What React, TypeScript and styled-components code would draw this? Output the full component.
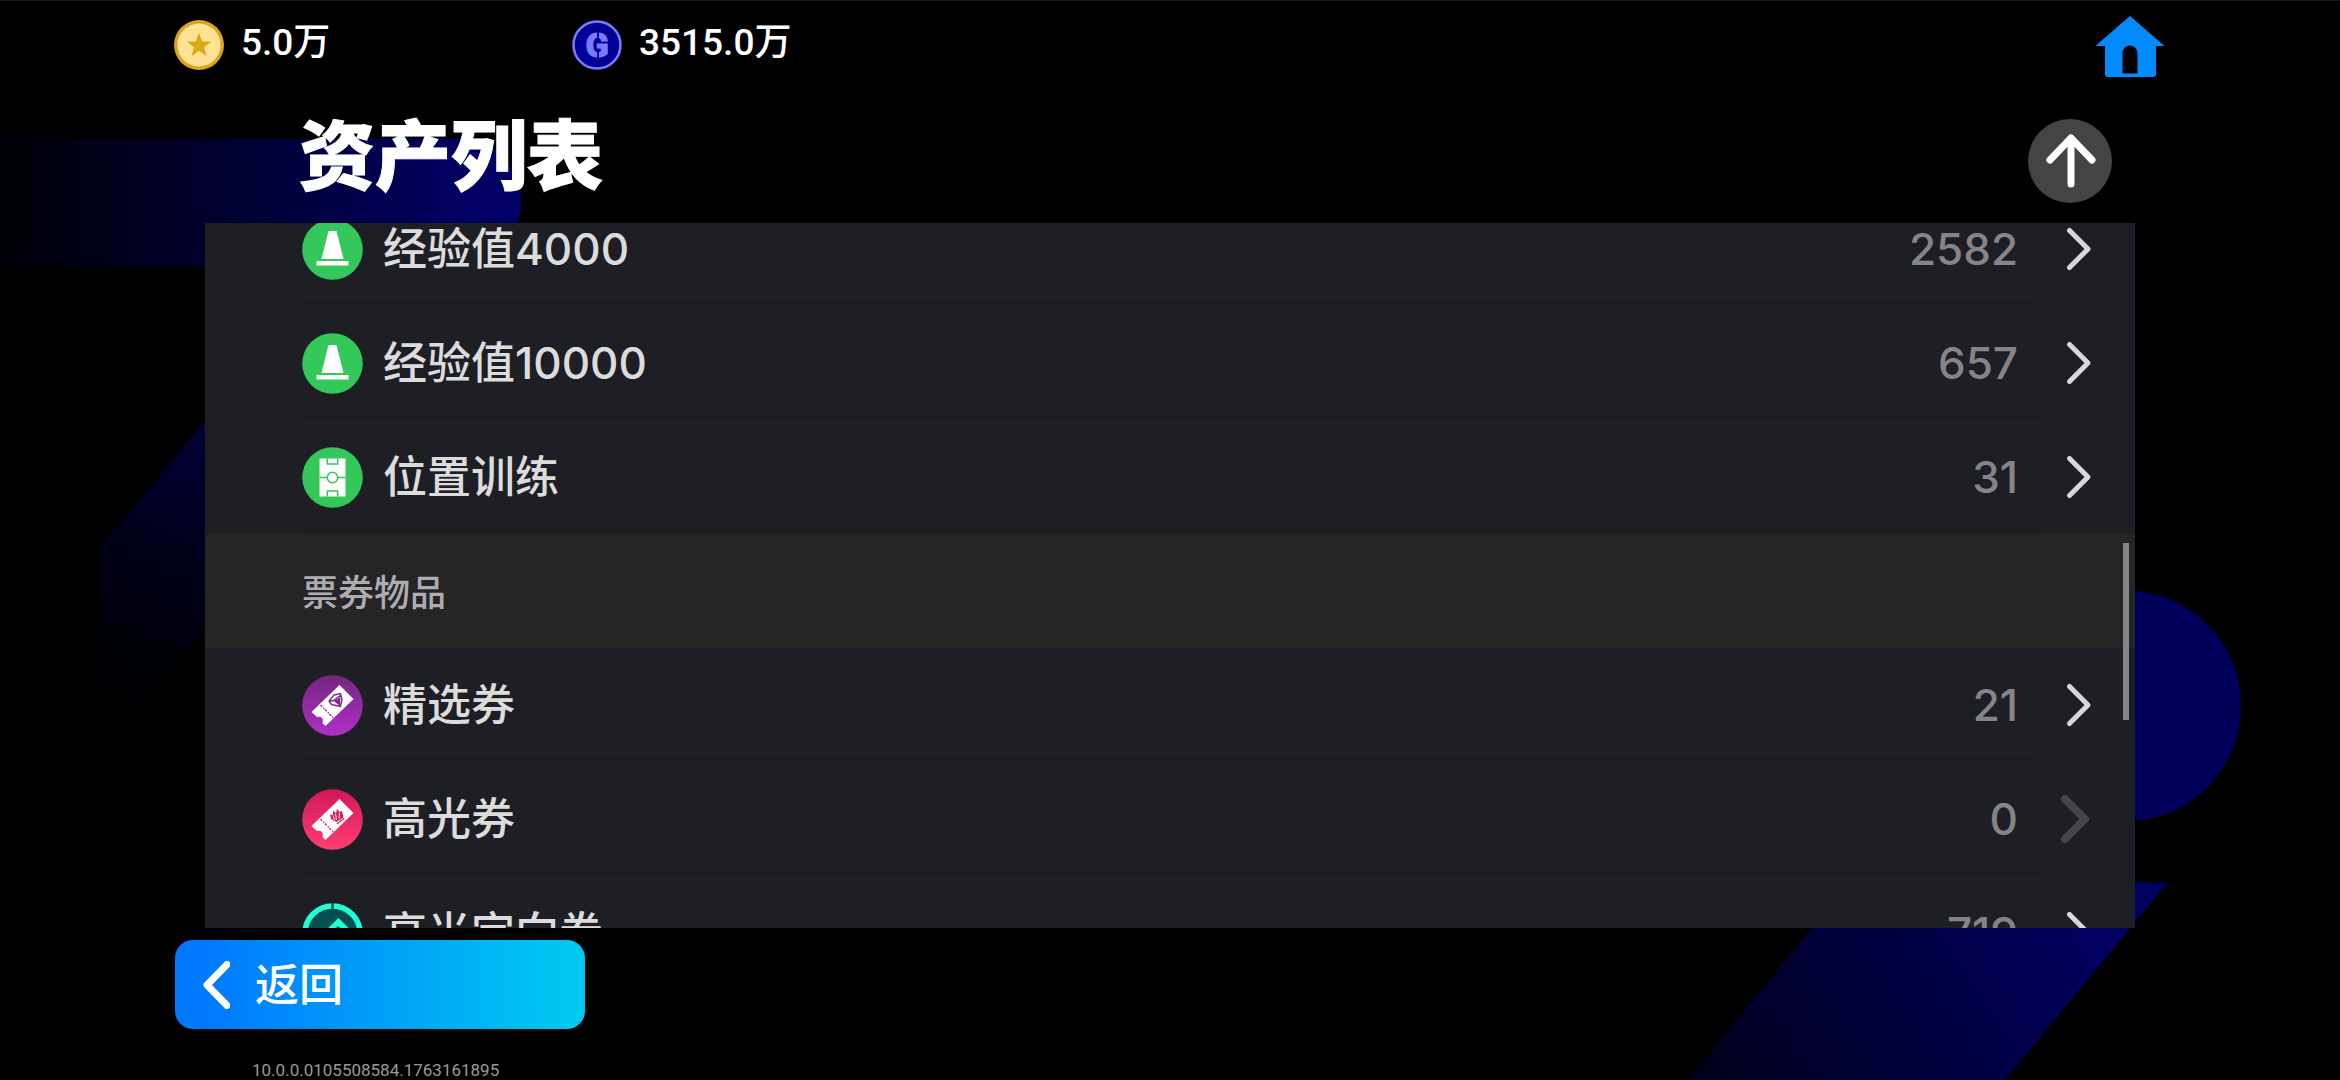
import React from 'react';
import styled, { createGlobalStyle } from 'styled-components';

const GlobalStyle = createGlobalStyle`
  * { box-sizing: border-box; }
  body { margin: 0; background: #000; }
  button { margin: 0; padding: 0; border: 0; background: none; color: inherit; font: inherit; text-align: left; cursor: pointer; }
  ul { margin: 0; padding: 0; list-style: none; }
  svg { display: block; flex: none; }
`;

const Screen = styled.div`
  position: relative;
  isolation: isolate;
  display: flex;
  flex-direction: column;
  height: 100vh;
  overflow: hidden;
  color: #fff;
  background: #000;
  border-top: 1px solid #161616;
  font-family: Inter, 'Noto Sans CJK SC', sans-serif;
`;

const Backdrop = styled.svg`
  position: absolute;
  inset: 0;
  z-index: -1;
  width: 100%;
  height: 100%;
`;

const TopBar = styled.header`
  display: flex;
  align-items: center;
  height: 88px;
  padding: 0 175px 0 174px;
`;

const Currency = styled.div`
  display: flex;
  align-items: center;
  gap: 17px;
  width: 398px;
`;

const Amount = styled.span`
  height: 50px;
  font: 500 37px/46px Roboto, 'Noto Sans CJK SC', sans-serif;
`;

const HomeButton = styled.button`
  margin-left: auto;
  padding-top: 4px;
`;

const TitleRow = styled.div`
  display: flex;
  align-items: center;
  justify-content: space-between;
  height: 134px;
  padding: 10px 228px 0 299px;
`;

const Title = styled.h1`
  margin: 0;
  height: 98px;
  font: 900 76px/78px 'Noto Sans CJK SC', sans-serif;
  -webkit-text-stroke: 1px currentColor;
`;

const TopButton = styled.button`
  display: grid;
  place-items: center;
  width: 84px;
  height: 84px;
  border-radius: 50%;
  background: #444;
`;

const Panel = styled.main`
  position: relative;
  flex: 1;
  min-height: 0;
  margin: 0 205px;
  overflow: hidden;
  background: #1e1f24;
`;

const List = styled.ul`
  margin-top: -31px;
`;

const Row = styled.button`
  position: relative;
  display: flex;
  align-items: center;
  width: 100%;
  height: 114px;
  padding: 0 37px 0 97px;

  &::after {
    content: '';
    position: absolute;
    left: 97px;
    right: 97px;
    bottom: 1px;
    height: 3px;
    background: #1b1c20;
  }
`;

const Name = styled.span`
  flex: 1;
  margin-left: 20px;
  color: #dcdcdc;
  font-size: 44px;
  font-weight: 500;
  line-height: 60px;
`;

const Count = styled.span`
  margin-right: 32px;
  color: #858589;
  font-size: 44px;
  font-weight: 500;
  line-height: 60px;
`;

const SectionTitle = styled.h2`
  margin: 0;
  height: 114px;
  padding-left: 97px;
  background: #252525;
  color: #adadb1;
  font: 500 36px/112px 'Noto Sans CJK SC', sans-serif;
`;

const ScrollThumb = styled.div`
  position: absolute;
  top: 320px;
  right: 6px;
  width: 6px;
  height: 177px;
  background: #858589;
`;

const Footer = styled.footer`
  display: flex;
  flex-direction: column;
  align-items: flex-start;
  height: 152px;
  padding: 12px 175px 0;
`;

const BackButton = styled.button`
  display: flex;
  align-items: center;
  gap: 25px;
  width: 410px;
  height: 90px;
  padding-left: 28px;
  border-radius: 18px;
  background: linear-gradient(90deg, #0078ff 6%, #00c8f0 96%);
  font-size: 44px;
  font-weight: 500;
  line-height: 60px;
`;

const Version = styled.span`
  margin: 31px 0 0 77px;
  color: #999;
  font: 400 17px/20px Roboto, sans-serif;
`;

const BackgroundArt = () => (
  <Backdrop viewBox="0 0 2340 1080" preserveAspectRatio="none" aria-hidden="true">
    <defs>
      <linearGradient id="bar" x1="0" x2="1">
        <stop offset="0" stopColor="#000008" />
        <stop offset="0.5" stopColor="#000036" />
        <stop offset="0.9" stopColor="#000064" />
      </linearGradient>
      <linearGradient id="left" gradientUnits="userSpaceOnUse" x1="225" y1="430" x2="100" y2="700">
        <stop offset="0" stopColor="#000038" />
        <stop offset="0.55" stopColor="#000014" />
        <stop offset="0.9" stopColor="#000006" />
        <stop offset="1" stopColor="#000000" />
      </linearGradient>
      <linearGradient id="slash" gradientUnits="userSpaceOnUse" x1="2070" y1="900" x2="1740" y2="1120">
        <stop offset="0" stopColor="#000060" />
        <stop offset="1" stopColor="#00001c" />
      </linearGradient>
    </defs>
    <path d="M0 138H457A64 64 0 0 1 457 266H0Z" fill="url(#bar)" />
    <path d="M205 421L99 548V695L130 712L205 632Z" fill="url(#left)" />
    <path d="M2126 590A115 115.500 0 0 1 2126 821Z" fill="#00005c" />
    <path d="M1850 882H2168L2005 1080H1687Z" fill="url(#slash)" />
  </Backdrop>
);

const CoinIcon = () => (
  <svg width="50" height="50" viewBox="0 0 50 50" aria-hidden="true">
    <circle cx="25" cy="25" r="25" fill="#dba520" />
    <circle cx="25" cy="25" r="21.500" fill="#ffe394" />
    <path d="M25 12.500L28 21.600H37.500L29.900 27.200L32.700 36.300L25 30.800L17.300 36.300L20.100 27.200L12.500 21.600H22Z" fill="#dba815" />
  </svg>
);

const GpIcon = () => (
  <svg width="50" height="50" viewBox="0 0 50 50" aria-hidden="true">
    <circle cx="25" cy="25" r="23.500" fill="#000096" stroke="#7b7bf5" strokeWidth="2.500" />
    <text x="25" y="37" textAnchor="middle" fill="#7b7bff" stroke="#7b7bff" strokeWidth="1" fontFamily="Roboto, sans-serif" fontWeight="900" fontSize="34">G</text>
    <path d="M26 11V19M26 32V40" stroke="#000096" strokeWidth="1.800" />
  </svg>
);

const HomeIcon = () => (
  <svg width="70" height="62" viewBox="0 0 70 62" aria-hidden="true">
    <path fillRule="evenodd" fill="#008cff" d="M35 0L69.500 30H61V58Q61 61 58 61H13Q10 61 10 58V30H.5ZM27.500 57.500H42.500V38C42.500 32.500 39 29.500 35 29.500S27.500 32.500 27.500 38Z" />
  </svg>
);

const ArrowUpIcon = () => (
  <svg width="54" height="56" viewBox="0 0 54 56" fill="none" stroke="#fff" strokeWidth="7" strokeLinecap="round" strokeLinejoin="round" aria-hidden="true">
    <path d="M28 51V5M7 27L28 5L49 27" />
  </svg>
);

const Chevron = ({ dim }: { dim?: boolean }) => (
  <svg width="48" height="48" viewBox="0 0 48 48" fill="none" strokeLinecap="round" strokeLinejoin="round" aria-hidden="true">
    {dim ? (
      <path d="M15 4L35 24L15 44" stroke="#46464a" strokeWidth="8" />
    ) : (
      <path d="M19.500 5.500L38 24L19.500 42.500" stroke="#d8d8d8" strokeWidth="5" />
    )}
  </svg>
);

const BackIcon = () => (
  <svg width="27" height="48" viewBox="0 0 27 48" fill="none" stroke="#fff" strokeWidth="7" strokeLinecap="round" strokeLinejoin="round" aria-hidden="true">
    <path d="M24 3.500L4 24L24 44.500" />
  </svg>
);

const ConeIcon = () => (
  <>
    <circle cx="30.500" cy="30.500" r="30.300" fill="#34c85a" />
    <path d="M26.500 12H34.500L41.500 40H19.500ZM14.500 42H46.500V46.500H14.500Z" fill="#fff" />
  </>
);

const PitchIcon = () => (
  <>
    <circle cx="30.500" cy="30.500" r="30.300" fill="#34c85a" />
    <rect x="17.500" y="11.500" width="26" height="38" fill="#fff" />
    <g fill="none" stroke="#34c85a" strokeWidth="1.500">
      <circle cx="30.500" cy="30.500" r="5.200" />
      <path d="M17.500 30.500H25M36 30.500H43.500M25.300 11.500V17H35.700V11.500M25.300 49.500V44H35.700V49.500" />
    </g>
  </>
);

const ticketPath = 'M37.500 10L51.500 24L23.500 51L20.500 48C22 44 19.500 40.500 15 42L9.500 37Z';

const Perforation = ({ color }: { color: string }) => (
  <path d="M18.500 30L31.500 43" stroke={color} strokeWidth="1.400" strokeDasharray="2.500 1.500 1.300 1" fill="none" />
);

const DiamondTicketIcon = () => (
  <>
    <defs>
      <linearGradient id="purple" x1="0" y1="0" x2="0" y2="1">
        <stop offset="0" stopColor="#74267e" />
        <stop offset="1" stopColor="#b02fc8" />
      </linearGradient>
    </defs>
    <circle cx="30.500" cy="30.500" r="30.300" fill="url(#purple)" />
    <path d={ticketPath} fill="#fff" />
    <g fill="none" stroke="#7f2a8c" strokeWidth="1.400" strokeLinejoin="round">
      <path d="M27 26L32 20L38.500 18.500L40 24.500L38.500 31.500L29.500 29.500ZM27 26L31.500 25.500L39 20" />
    </g>
    <path d="M31.500 26L38.500 22L38 31Z" fill="#7f2a8c" />
    <Perforation color="#922ca3" />
  </>
);

const CrownTicketIcon = () => (
  <>
    <defs>
      <linearGradient id="pink" x1="0" y1="0" x2="0" y2="1">
        <stop offset="0" stopColor="#d01858" />
        <stop offset="1" stopColor="#ff3d72" />
      </linearGradient>
    </defs>
    <circle cx="30.500" cy="30.500" r="30.300" fill="url(#pink)" />
    <path d={ticketPath} fill="#fff" />
    <path d="M28 25.500L31 26L31 21.500L34 24.500L35 20L37.500 23L40 22L41.500 28.500L34.500 33L29 30Z" fill="#d81f5c" />
    <path d="M33.500 25L34.500 31M37.500 24L37 29.500M31 26.500L32.500 31" stroke="#fff" strokeWidth="0.900" />
    <path d="M35 35L42 29.500" stroke="#d81f5c" strokeWidth="1.200" />
    <Perforation color="#e4265f" />
  </>
);

const TargetTicketIcon = () => (
  <>
    <circle cx="30.500" cy="30.500" r="27.500" fill="#00504f" stroke="#1effd6" strokeWidth="5.500" />
    <path d="M30.500 0V6" stroke="#00504f" strokeWidth="2.500" />
    <path d={ticketPath} transform="translate(-1 5)" fill="#1effd6" />
    <path d="M30 29L36 23L41 28L34 34Z" fill="#00504f" />
  </>
);

type Asset = { name: string; count: number; Icon: () => React.JSX.Element };

const training: Asset[] = [
  { name: '经验值4000', count: 2582, Icon: ConeIcon },
  { name: '经验值10000', count: 657, Icon: ConeIcon },
  { name: '位置训练', count: 31, Icon: PitchIcon },
];

const tickets: Asset[] = [
  { name: '精选券', count: 21, Icon: DiamondTicketIcon },
  { name: '高光券', count: 0, Icon: CrownTicketIcon },
  { name: '高光定向券', count: 719, Icon: TargetTicketIcon },
];

const AssetRow = ({ name, count, Icon }: Asset) => (
  <li>
    <Row type="button">
      <svg width="61" height="61" viewBox="0 0 61 61" aria-hidden="true">
        <Icon />
      </svg>
      <Name>{name}</Name>
      <Count>{count}</Count>
      <Chevron dim={count === 0} />
    </Row>
  </li>
);

export default function App() {
  return (
    <Screen>
      <GlobalStyle />
      <BackgroundArt />
      <TopBar>
        <Currency>
          <CoinIcon />
          <Amount>5.0万</Amount>
        </Currency>
        <Currency>
          <GpIcon />
          <Amount>3515.0万</Amount>
        </Currency>
        <HomeButton type="button" aria-label="主页">
          <HomeIcon />
        </HomeButton>
      </TopBar>
      <TitleRow>
        <Title>资产列表</Title>
        <TopButton type="button" aria-label="回到顶部">
          <ArrowUpIcon />
        </TopButton>
      </TitleRow>
      <Panel>
        <List>
          {training.map((asset) => (
            <AssetRow key={asset.name} {...asset} />
          ))}
          <li>
            <SectionTitle>票券物品</SectionTitle>
          </li>
          {tickets.map((asset) => (
            <AssetRow key={asset.name} {...asset} />
          ))}
        </List>
        <ScrollThumb />
      </Panel>
      <Footer>
        <BackButton type="button">
          <BackIcon />
          返回
        </BackButton>
        <Version>10.0.0.0105508584.1763161895</Version>
      </Footer>
    </Screen>
  );
}
